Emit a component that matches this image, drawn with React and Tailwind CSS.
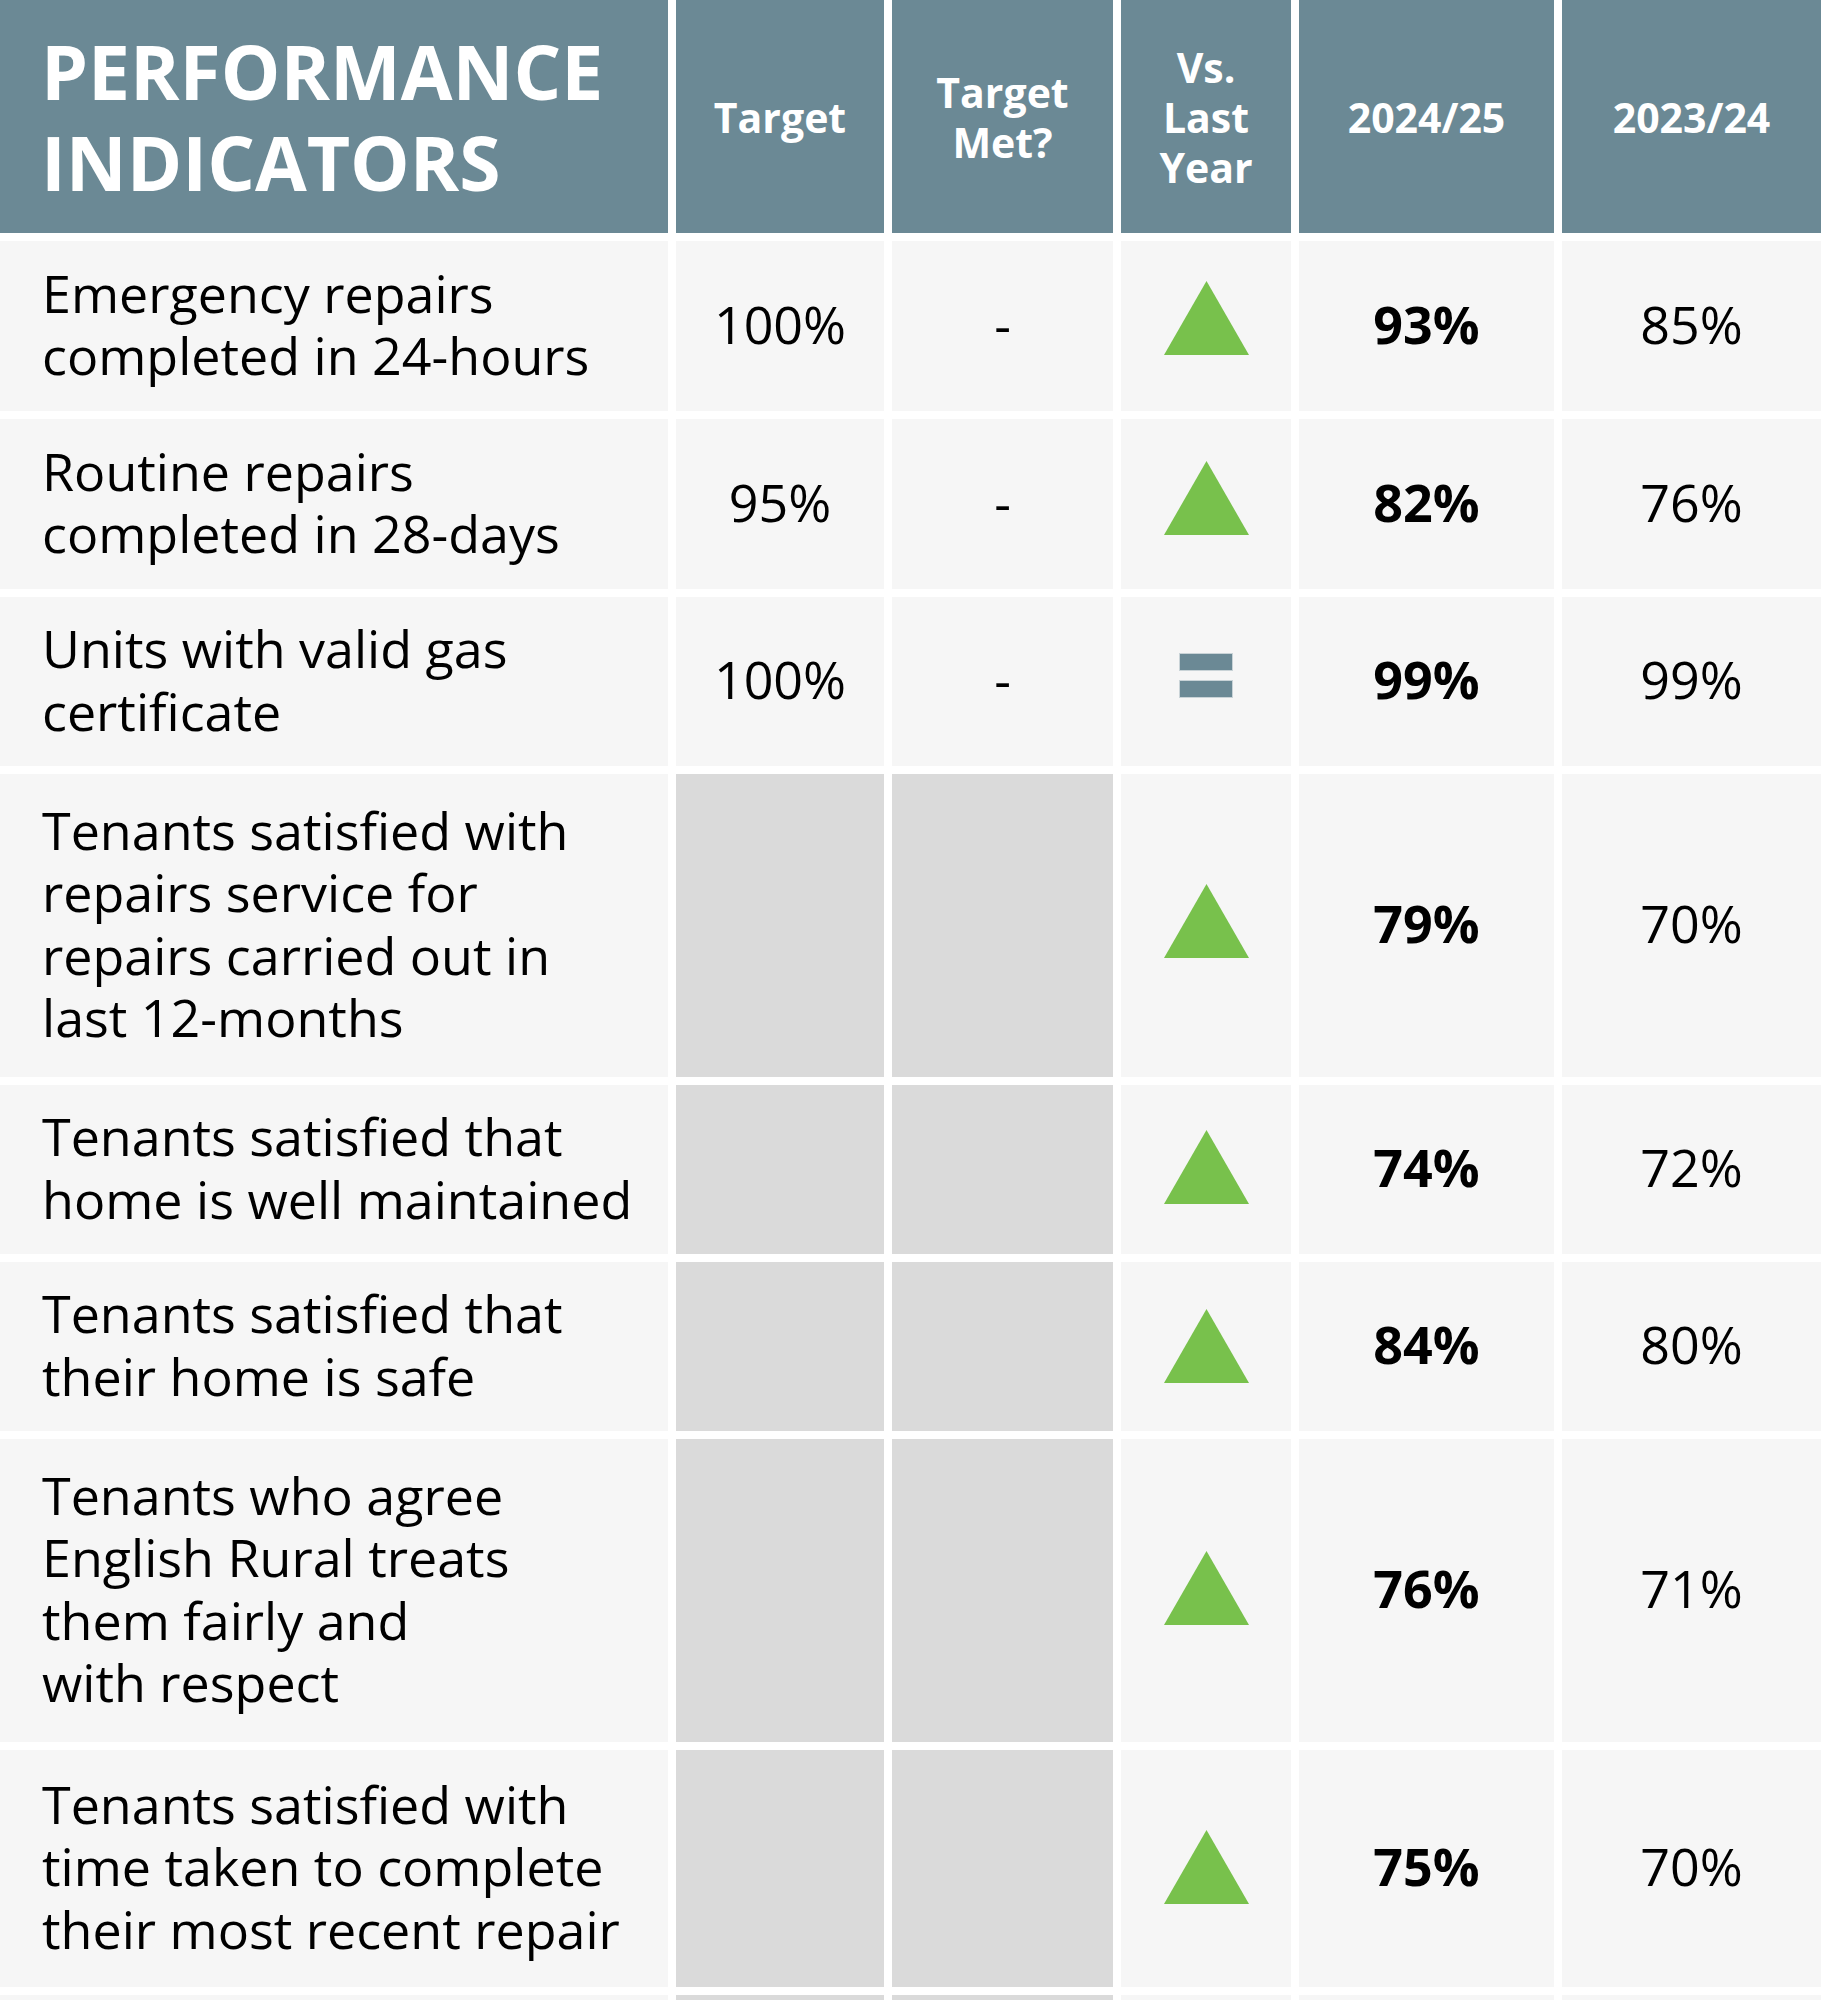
import React from "react";

const rows = [
  { h: "h-[170px]", lines: ["Emergency repairs", "completed in 24-hours"], target: "100%", met: "-", vs: "up", off: "-translate-y-[6px]", cur: "93%", prev: "85%" },
  { h: "h-[170px]", lines: ["Routine repairs", "completed in 28-days"], target: "95%", met: "-", vs: "up", off: "-translate-y-[4px]", cur: "82%", prev: "76%" },
  { h: "h-[169px]", lines: ["Units with valid gas", "certificate"], target: "100%", met: "-", vs: "eq", off: "-translate-y-[4px]", cur: "99%", prev: "99%" },
  { h: "h-[303px]", lines: ["Tenants satisfied with", "repairs service for", "repairs carried out in", "last 12-months"], blank: true, vs: "up", off: "-translate-y-[3px]", cur: "79%", prev: "70%" },
  { h: "h-[169px]", lines: ["Tenants satisfied that", "home is well maintained"], blank: true, vs: "up", off: "-translate-y-[1px]", cur: "74%", prev: "72%" },
  { h: "h-[169px]", lines: ["Tenants satisfied that", "their home is safe"], blank: true, vs: "up", off: "translate-y-[1px]", cur: "84%", prev: "80%" },
  { h: "h-[303px]", lines: ["Tenants who agree", "English Rural treats", "them fairly and", "with respect"], blank: true, vs: "up", off: "-translate-y-[1px]", cur: "76%", prev: "71%" },
  { h: "h-[237px]", lines: ["Tenants satisfied with", "time taken to complete", "their most recent repair"], blank: true, vs: "up", off: "translate-y-[0px]", cur: "75%", prev: "70%" },
];

const cols = "grid grid-cols-[668px_208px_221px_170px_255px_259px] gap-x-[8px]";

function Up() {
  return (
    <svg width="85" height="74" viewBox="0 0 85 74">
      <polygon points="42.5,0 85,74 0,74" fill="#78c14c" />
    </svg>
  );
}

function Eq() {
  return (
    <div className="flex flex-col gap-[9px]">
      <div className="w-[54px] h-[18px] bg-[#6b8995] border border-[#c9d3d7]" />
      <div className="w-[54px] h-[18px] bg-[#6b8995] border border-[#c9d3d7]" />
    </div>
  );
}

function HeadLabel({ lines }) {
  return (
    <div className="bg-[#6b8995] flex items-center justify-center text-center text-white font-bold text-[41px] leading-[50px]">
      <div>
        {lines.map((l, i) => (
          <div key={i}>{l}</div>
        ))}
      </div>
    </div>
  );
}

export default function App() {
  return (
    <div
      className="w-[1824px] bg-white flex flex-col gap-y-[8px] text-black"
      style={{ fontFamily: '"Open Sans", "Noto Sans", sans-serif' }}
    >
      <div className={`${cols} h-[233px]`}>
        <div className="bg-[#6b8995] flex items-center pl-[41px] text-white font-bold text-[75px] leading-[91px]">
          <div>
            <div>PERFORMANCE</div>
            <div>INDICATORS</div>
          </div>
        </div>
        <HeadLabel lines={["Target"]} />
        <HeadLabel lines={["Target", "Met?"]} />
        <HeadLabel lines={["Vs.", "Last", "Year"]} />
        <HeadLabel lines={["2024/25"]} />
        <HeadLabel lines={["2023/24"]} />
      </div>
      {rows.map((r, i) => (
        <div key={i} className={`${cols} ${r.h} text-[52px] leading-[62.5px]`}>
          <div className="bg-[#f6f6f6] flex items-center pl-[42px] pb-[4px]">
            <div>
              {r.lines.map((l, j) => (
                <div key={j}>{l}</div>
              ))}
            </div>
          </div>
          {r.blank ? (
            <>
              <div className="bg-[#dadada]" />
              <div className="bg-[#dadada]" />
            </>
          ) : (
            <>
              <div className="bg-[#f6f6f6] flex items-center justify-center pb-[4px]">{r.target}</div>
              <div className="bg-[#f6f6f6] flex items-center justify-center pb-[4px]">{r.met}</div>
            </>
          )}
          <div className="bg-[#f6f6f6] flex items-center justify-center pb-[4px]">
            <div className={r.off}>{r.vs === "up" ? <Up /> : <Eq />}</div>
          </div>
          <div className="bg-[#f6f6f6] flex items-center justify-center font-bold pb-[4px]">{r.cur}</div>
          <div className="bg-[#f6f6f6] flex items-center justify-center pb-[4px]">{r.prev}</div>
        </div>
      ))}
      <div className={`${cols} h-[170px]`}>
        <div className="bg-[#f6f6f6]" />
        <div className="bg-[#dadada]" />
        <div className="bg-[#dadada]" />
        <div className="bg-[#f6f6f6]" />
        <div className="bg-[#f6f6f6]" />
        <div className="bg-[#f6f6f6]" />
      </div>
    </div>
  );
}
